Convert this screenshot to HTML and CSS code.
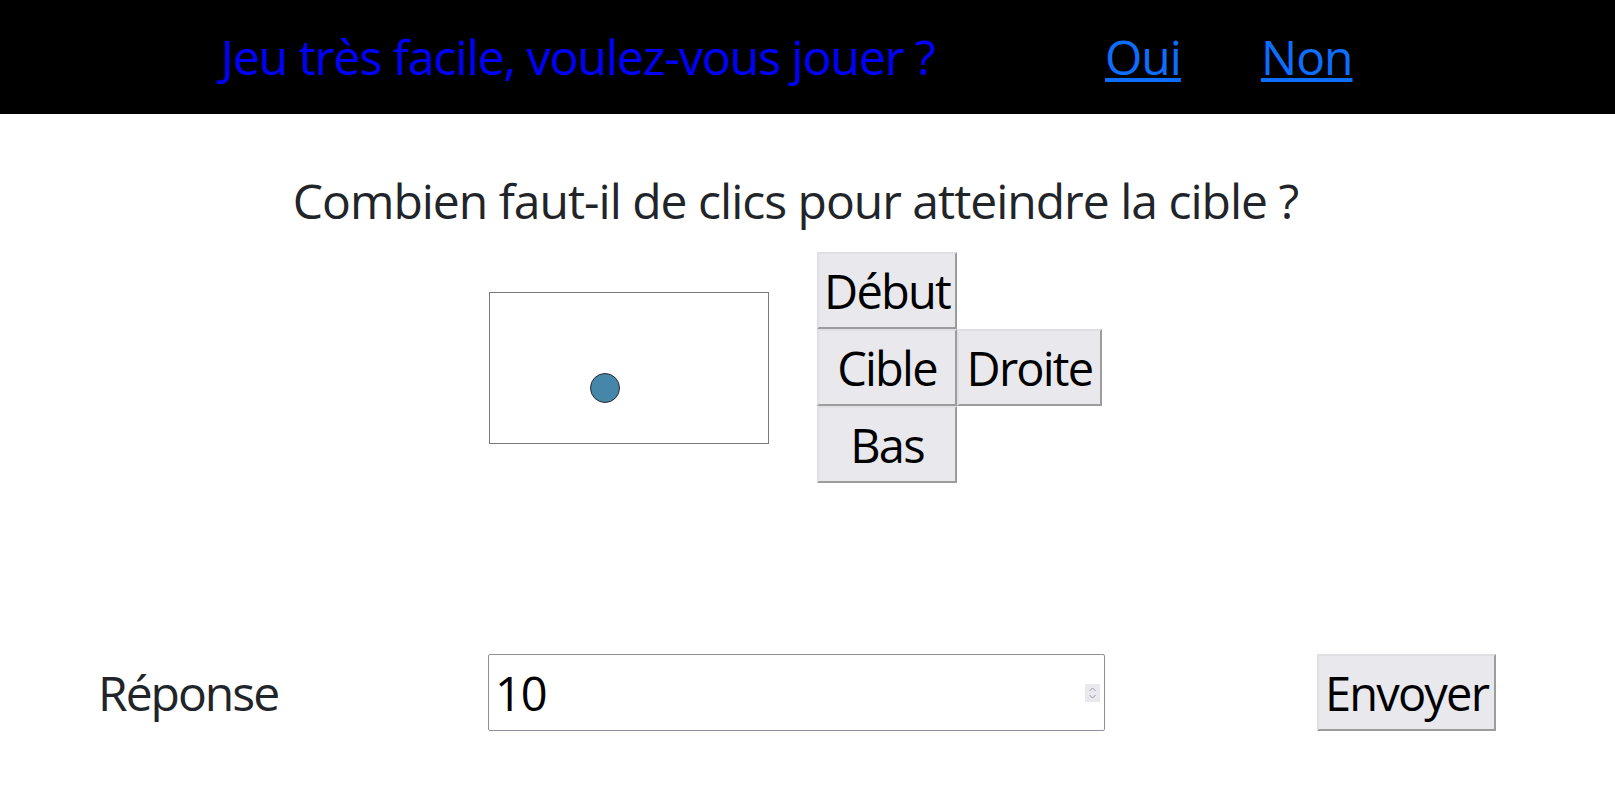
FILE: index.html
```html
<!DOCTYPE html>
<html lang="fr">
<head>
  <meta charset="UTF-8">
  <title>Jeu très facile</title>
  <link rel="stylesheet" href="styles.css">
</head>
<body>

<header class="topbar">
  <span class="topbar-title">Jeu très facile, voulez-vous jouer ?</span>
  <a class="topbar-link" href="#">Oui</a>
  <a class="topbar-link" href="#">Non</a>
</header>

<main>
  <p class="question">Combien faut-il de clics pour atteindre la cible ?</p>

  <div class="game">
    <svg class="board" width="278" height="150" viewBox="0 0 278 150">
      <circle cx="115" cy="95" r="14.5" fill="#4687a9" stroke="#2b2b2b" stroke-width="1"/>
    </svg>
    <div class="pad">
      <button class="pad-btn start">Début</button>
      <button class="pad-btn target">Cible</button>
      <button class="pad-btn right">Droite</button>
      <button class="pad-btn down">Bas</button>
    </div>
  </div>

  <form class="answer" onsubmit="return false">
    <label class="answer-label" for="answer">Réponse</label>
    <div class="answer-field">
      <input class="answer-input" id="answer" type="text" value="10">
      <span class="spin">
        <svg width="9" height="14" viewBox="0 0 9 14">
          <path d="M1.5 5 L4.5 2 L7.5 5 M1.5 9 L4.5 12 L7.5 9" fill="none" stroke="#9a9aa6" stroke-width="1"/>
        </svg>
      </span>
    </div>
    <button class="answer-btn" type="submit">Envoyer</button>
  </form>
</main>

</body>
</html>
```

FILE: styles.css
```css
body {
  margin: 0;
  font-family: "Open Sans", "Noto Sans", sans-serif;
  font-size: 48px;
  line-height: 1.5;
  color: #212529;
  background-color: #fff;
}
.topbar {
  display: flex;
  align-items: center;
  height: 114px;
  padding-left: 221px;
  background-color: #000;
}
.topbar-title {
  width: 884px;
  color: #00f;
  letter-spacing: -1px;
}
.topbar-link {
  width: 156px;
  color: #0d6efd;
  letter-spacing: -1px;
}
.question {
  margin: 51px 0 0;
  padding-right: 24px;
  text-align: center;
  letter-spacing: -1px;
}
.game {
  display: flex;
  align-items: center;
  gap: 48px;
  margin-top: 15px;
  padding-left: 489px;
}
.board {
  display: block;
  border: 1px solid #7a7a7a;
  background-color: #fff;
}
.pad {
  display: grid;
  grid-template-columns: 140px 145px;
  grid-template-rows: repeat(3, 77px);
}
.pad-btn, .answer-btn {
  margin: 0;
  padding: 0 4px;
  font-family: inherit;
  font-size: 47px;
  letter-spacing: -1.8px;
  color: #000;
  background-color: #e9e9ed;
  border-style: solid;
  border-width: 2px;
  border-color: #e0e0e4 #9c9c9c #9c9c9c #e0e0e4;
}
.start { grid-column: 1; grid-row: 1; }
.target { grid-column: 1; grid-row: 2; }
.right { grid-column: 2; grid-row: 2; }
.down { grid-column: 1; grid-row: 3; }
.answer {
  display: flex;
  align-items: center;
  margin-top: 171px;
  padding-left: 98px;
}
.answer-label {
  width: 390px;
  letter-spacing: -2px;
}
.answer-field {
  display: flex;
  align-items: center;
  box-sizing: border-box;
  width: 617px;
  height: 77px;
  padding: 0 4px 0 6px;
  border: 1px solid #8f8f9d;
  border-radius: 2px;
}
.answer-input {
  flex: 1;
  min-width: 0;
  padding: 0;
  border: 0;
  outline: none;
  font-family: inherit;
  font-size: 47px;
  letter-spacing: -1px;
  color: #000;
}
.spin {
  display: flex;
  align-items: center;
  justify-content: center;
  width: 15px;
  height: 18px;
  background-color: #e9e9ed;
}
.answer-btn {
  width: 179px;
  height: 77px;
  margin-left: 212px;
}
```
